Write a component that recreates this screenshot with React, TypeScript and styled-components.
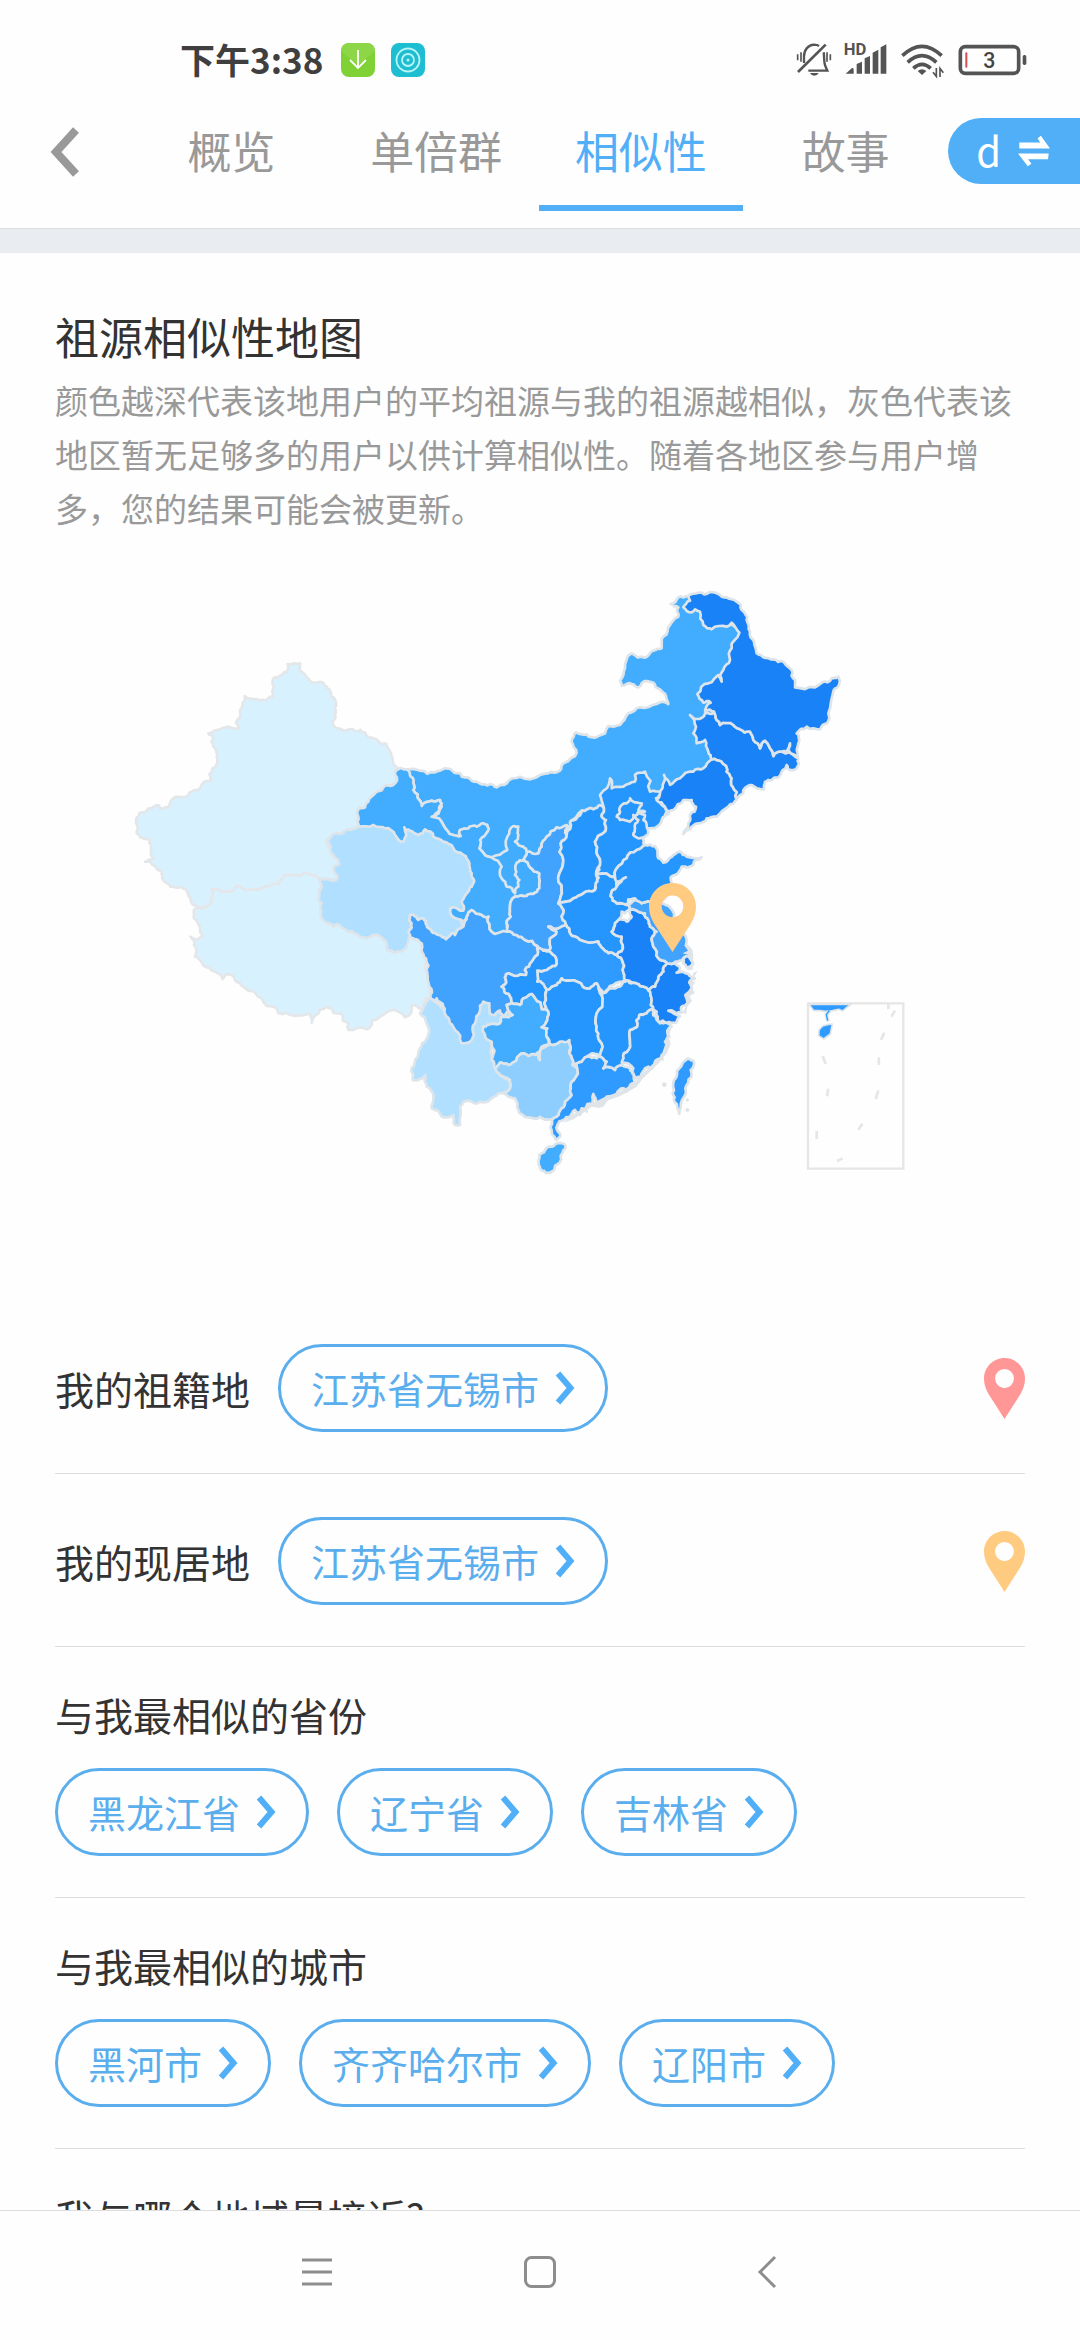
import React from "react";
import styled, { createGlobalStyle } from "styled-components";

const color = {
  brand: "#51aff7",
  brandText: "#5aaeed",
  ink: "#333333",
  muted: "#999999",
  line: "#dddddd",
  band: "#e9edf1",
  mapLine: "#dde5eb",
  coral: "#ff9797",
  amber: "#ffcb80",
  status: "#545454",
};

const GlobalStyle = createGlobalStyle`
  * { box-sizing: border-box; }
  body {
    margin: 0;
    background: #fefefe;
    color: ${color.ink};
    font-family: "Noto Sans CJK SC", "Noto Sans", sans-serif;
  }
  button {
    margin: 0;
    padding: 0;
    border: 0;
    background: none;
    color: inherit;
    font: inherit;
    cursor: pointer;
  }
`;

const Screen = styled.div`
  display: flex;
  flex-direction: column;
  height: 100vh;
  background: #fefefe;
`;

const StatusBar = styled.div`
  display: flex;
  flex: none;
  align-items: center;
  justify-content: space-between;
  height: 98px;
  padding: 22px 53px 0 180px;
`;

const StatusGroup = styled.div<{ $gap: number }>`
  display: flex;
  align-items: center;
  gap: ${(p) => p.$gap}px;
`;

const Clock = styled.time`
  margin-right: 2px;
  padding-bottom: 2px;
  color: #3f3f3f;
  font-size: 35px;
  font-weight: 700;
  line-height: 48px;
`;

const Header = styled.header`
  display: flex;
  flex: none;
  align-items: flex-start;
  padding-bottom: 17px;
  border-bottom: 1px solid ${color.line};
`;

const BackButton = styled.button`
  display: grid;
  place-items: center;
  width: 129px;
  height: 107px;
`;

const Tabs = styled.div`
  display: flex;
  flex: 1;
`;

const Tab = styled.button<{ $active: boolean }>`
  flex: 1;
  height: 113px;
  padding-bottom: 4px;
  border-bottom: 6px solid ${(p) => (p.$active ? color.brand : "transparent")};
  color: ${(p) => (p.$active ? color.brand : color.muted)};
  font-size: 44px;
  line-height: 64px;
`;

const SwitchButton = styled.button`
  display: flex;
  align-items: center;
  justify-content: flex-end;
  gap: 17px;
  width: 132px;
  height: 66px;
  margin-top: 20px;
  padding-right: 30px;
  border-radius: 33px 0 0 33px;
  background: ${color.brand};
  color: #ffffff;
  font-size: 40px;
`;

const SwitchLabel = styled.span`
  padding-bottom: 3px;
  line-height: 60px;
`;

const Content = styled.main`
  flex: 1;
  min-height: 0;
  overflow-y: auto;
  scrollbar-width: none;
  border-top: 24px solid ${color.band};
`;

const Intro = styled.section`
  padding: 48px 55px 0;
`;

const Title = styled.h1`
  margin: 0 0 2px;
  font-size: 44px;
  font-weight: 400;
  line-height: 70px;
`;

const Description = styled.p`
  margin: 0 0 1px;
  color: ${color.muted};
  font-size: 33px;
  line-height: 54px;
`;

const MapDrawing = styled.svg`
  display: block;
  width: 100%;
  height: auto;
`;

const PlaceBlock = styled.section`
  display: flex;
  align-items: center;
  gap: 28px;
  margin: 0 55px;
  padding: 43px 0 41px;
  border-bottom: 1px solid ${color.line};

  > svg {
    margin-left: auto;
  }
`;

const GroupBlock = styled.section`
  margin: 0 55px;
  padding: 40px 0 41px;
  border-bottom: 1px solid ${color.line};
`;

const Heading = styled.h2`
  margin: 0;
  font-size: 39px;
  font-weight: 400;
  line-height: 54px;
`;

const ChipRow = styled.div`
  display: flex;
  flex-wrap: wrap;
  gap: 28px;
  margin-top: 27px;
`;

const Chip = styled.button`
  display: flex;
  align-items: center;
  gap: 16px;
  height: 88px;
  padding: 0 30px;
  border: 3px solid ${color.brandText};
  border-radius: 44px;
  color: ${color.brandText};
  font-size: 38px;
  line-height: 54px;
`;

const SystemNav = styled.nav`
  display: flex;
  flex: none;
  justify-content: center;
  gap: 104px;
  height: 130px;
  border-top: 1px solid ${color.line};
`;

const NavButton = styled.button`
  display: grid;
  place-items: center;
  width: 121px;
  height: 121px;
`;

/* ---------- map data ---------- */

type Region = { name: string; fill: string; pts: string };

const pale = "#d8f1ff";
const light = "#b0dfff";
const soft = "#8dceff";
const sky = "#42adff";
const azure = "#42a3ff";
const blue = "#2696ff";
const mid = "#2f9aff";
const deep = "#1a82f7";

const westRegions: Region[] = [
  { name: "西藏", fill: pale, pts: "228,803 262,798 275,748 300,752 330,757 345,742 360,738 375,750 415,750 445,738 475,732 490,712 520,706 555,698 575,705 600,716 605,740 598,760 605,790 602,820 620,848 640,860 655,853 680,872 710,882 750,890 775,886 800,912 802,930 825,938 858,925 865,900 870,890 895,900 905,920 918,950 922,1000 928,1050 932,1080 915,1075 905,1110 875,1095 868,1125 855,1132 810,1112 780,1130 755,1145 740,1168 685,1170 685,1150 668,1140 665,1120 640,1118 620,1100 600,1108 575,1148 570,1120 525,1128 500,1118 475,1120 470,1105 440,1098 425,1075 405,1058 385,1052 360,1030 335,1005 318,1003 308,1017 295,1000 270,985 240,960 225,950 222,915 212,890 225,897 248,888 240,865 222,835 222,810" },
  { name: "新疆", fill: pale, pts: "503,72 540,70 540,92 560,112 582,128 596,126 612,133 628,148 634,170 648,188 647,220 637,245 644,262 670,271 705,273 735,277 765,297 785,312 798,311 805,325 818,355 832,383 826,395 825,430 795,437 770,455 745,485 735,502 717,503 715,530 718,560 690,570 660,582 620,600 630,630 655,660 658,672 640,685 652,715 625,718 600,716 575,705 555,698 520,706 490,712 475,732 445,738 415,750 375,750 360,738 345,742 330,757 300,752 275,748 262,798 235,803 215,790 205,765 198,748 165,742 140,730 128,718 125,695 105,678 75,665 100,655 92,620 88,597 60,592 50,580 48,550 58,520 85,505 115,495 120,507 145,503 157,478 200,470 215,455 245,435 273,422 277,385 292,372 290,350 280,320 280,290 265,280 300,268 330,262 355,265 348,248 360,210 374,168 400,178 435,182 460,170 462,140 463,112 485,105 500,95" },
];

const coreRegions: Region[] = [
  { name: "内蒙古", fill: sky, pts: "22,88 60,92 105,97 120,92 180,100 185,110 215,122 245,133 280,135 290,142 320,130 360,110 420,105 465,98 480,92 495,68 530,38 515,5 528,-23 560,-17 592,-10 625,-42 660,-45 685,-80 720,-98 770,-108 805,-108 798,-132 780,-152 760,-172 725,-170 715,-158 695,-168 665,-163 660,-178 675,-215 695,-260 735,-247 760,-268 785,-275 790,-310 810,-345 835,-370 835,-398 812,-408 835,-428 865,-432 890,-425 1030,-325 1010,-180 960,-90 935,60 810,165 780,170 620,215 612,205 580,208 545,212 510,250 500,265 470,262 440,290 425,320 415,340 380,345 340,380 275,352 265,350 238,325 238,300 262,275 260,255 230,260 180,270 182,288 160,285 130,255 95,230 125,200 120,180 95,182 65,198 58,180 40,150 42,135" },
  { name: "甘肃", fill: sky, pts: "-15,95 22,88 32,110 42,135 40,150 58,180 65,198 95,182 120,180 125,190 118,210 95,230 130,255 160,285 182,288 180,270 205,265 230,260 250,250 262,255 262,275 240,300 238,325 265,350 275,352 370,360 390,382 418,400 418,445 400,462 380,468 345,470 330,500 332,530 320,550 322,575 310,585 285,582 268,560 265,530 245,525 215,510 200,530 195,555 180,560 130,520 150,490 100,400 0,330 -60,300 -122,260 -125,230 -123,203 -105,202 -95,185 -70,155 -45,137 -15,130" },
  { name: "青海", fill: light, pts: "-122,260 -80,255 -45,265 -15,285 10,305 13,262 30,272 55,285 75,268 100,290 130,305 160,325 190,345 208,370 215,400 222,420 215,440 205,455 185,485 190,512 150,505 150,515 185,540 190,560 165,585 155,580 138,598 115,585 95,575 80,555 70,535 55,540 40,525 30,525 28,540 35,550 28,570 30,590 18,625 -15,638 -38,630 -40,612 -65,586 -90,590 -130,582 -160,572 -185,553 -200,560 -220,548 -238,520 -235,490 -242,460 -235,440 -240,416 -215,418 -188,415 -200,385 -182,372 -185,360 -210,330 -220,300 -180,282 -150,270" },
  { name: "云南", fill: light, pts: "92,775 80,785 70,800 60,820 75,835 75,905 55,940 45,965 35,985 38,1020 75,1005 80,1040 100,1070 95,1105 125,1130 160,1125 165,1155 180,1155 180,1100 205,1082 240,1085 270,1080 295,1060 320,1055 330,1035 325,1015 300,1005 285,985 275,960 275,910 255,885 250,860 275,852 300,850 302,835 325,832 338,825 300,800 260,770 200,850" },
  { name: "四川", fill: azure, pts: "30,525 40,525 55,540 70,535 80,555 95,575 115,585 138,598 155,580 165,585 190,560 200,530 215,510 245,525 265,530 268,560 285,582 320,575 350,585 375,600 412,618 405,650 395,665 375,690 378,705 345,708 318,703 318,722 305,740 315,758 330,770 335,790 320,795 325,812 310,828 300,812 285,825 270,822 268,790 250,785 240,812 225,850 222,885 215,900 185,910 165,870 150,850 140,830 130,800 110,775 105,785 92,775 88,740 82,700 78,655 68,640 58,605 40,595 30,590 28,570 35,550 28,540" },
  { name: "陕西", fill: azure, pts: "500,255 470,262 440,290 425,320 415,340 380,335 370,360 390,382 418,400 418,445 400,462 380,468 345,470 330,500 332,530 320,550 320,575 350,585 375,600 412,618 448,632 450,595 470,575 445,560 475,565 498,555 490,520 475,490 485,450 478,400 490,360 482,310 500,285" },
  { name: "宁夏", fill: sky, pts: "370,320 380,335 370,360 350,368 345,405 358,420 355,440 345,460 320,440 305,415 305,380 275,352 322,330 328,280 340,258 355,260 355,285 345,305" },
  { name: "山西", fill: blue, pts: "612,205 600,195 580,208 545,212 530,235 510,245 500,285 482,310 490,360 478,400 485,450 475,490 520,475 550,460 585,450 592,415 600,375 590,340 585,305 600,285 618,265 618,240 605,225" },
  { name: "河北", fill: blue, pts: "612,205 600,165 630,115 635,145 670,140 705,125 705,105 735,95 750,155 785,158 768,175 800,215 785,240 770,260 745,265 725,285 730,310 735,315 710,330 680,355 650,385 645,412 592,402 600,375 590,340 585,305 600,285 618,265 618,240 605,225" },
  { name: "北京", fill: blue, pts: "690,175 700,185 725,190 715,210 735,215 715,232 700,225 690,245 660,240 650,230 660,215 665,195 680,190" },
  { name: "天津", fill: blue, pts: "715,215 735,225 730,240 740,260 745,275 735,290 715,295 700,285 705,265 715,240 705,230" },
  { name: "河南", fill: blue, pts: "592,402 645,412 650,440 632,468 650,490 685,495 690,510 675,520 665,515 655,540 645,550 635,575 665,590 668,615 650,645 625,640 608,625 595,605 540,600 510,580 498,555 490,520 475,490 520,475 550,460 585,450 592,425" },
  { name: "湖北", fill: mid, pts: "445,560 475,565 498,555 510,580 540,600 595,605 608,625 625,640 650,645 668,665 668,690 675,722 640,735 608,760 590,730 570,745 548,740 510,722 485,715 470,735 440,750 430,732 412,725 412,692 440,690 465,678 468,655 448,632 450,595 470,575" },
  { name: "重庆", fill: blue, pts: "412,618 430,632 448,632 468,655 465,678 440,690 412,692 412,725 430,732 437,770 440,808 425,808 405,775 395,762 370,775 360,795 335,790 330,770 315,758 305,740 318,722 318,703 345,708 378,705 375,690 395,665 405,650" },
  { name: "贵州", fill: sky, pts: "250,860 275,852 300,850 302,835 325,832 338,825 325,812 320,795 335,790 360,795 370,775 395,762 405,775 425,808 440,808 442,840 425,862 442,865 440,890 445,915 425,920 405,945 385,948 370,940 350,960 325,975 300,968 285,985 275,960 275,905 255,885" },
  { name: "广西", fill: soft, pts: "285,985 300,968 325,975 350,960 370,940 385,948 405,945 415,940 420,960 425,925 450,912 480,905 500,900 508,910 508,940 518,975 532,985 525,1015 512,1040 515,1065 495,1085 485,1105 470,1130 440,1138 420,1130 385,1132 355,1110 345,1075 310,1058 330,1045 330,1020 300,1005" },
  { name: "广东", fill: mid, pts: "532,985 530,970 545,965 560,950 590,955 600,945 620,965 610,985 645,990 665,975 690,985 702,1005 705,1030 690,1035 680,1055 672,1045 650,1062 620,1070 605,1098 590,1085 580,1062 578,1095 562,1092 560,1115 545,1105 540,1125 525,1110 510,1130 490,1140 478,1144 472,1155 472,1172 480,1190 470,1200 456,1182 456,1140 470,1130 485,1105 495,1085 515,1065 512,1040 525,1015" },
  { name: "湖南", fill: blue, pts: "440,750 470,735 485,715 510,722 548,740 570,745 590,730 600,760 608,775 590,820 590,860 595,880 605,910 600,950 580,940 560,950 545,965 530,970 518,975 508,940 508,900 480,905 450,912 440,890 442,865 425,862 442,840 440,808 437,770" },
  { name: "江西", fill: blue, pts: "608,760 640,745 665,735 680,722 700,728 720,738 745,750 755,780 760,808 740,820 718,825 712,860 690,870 690,910 672,940 665,975 645,990 610,985 620,965 600,950 605,910 595,880 590,860 590,820 608,775" },
  { name: "福建", fill: blue, pts: "760,808 770,840 780,850 800,848 815,860 802,872 808,890 795,905 800,925 785,945 788,958 765,965 755,985 745,980 722,1012 708,1015 700,985 665,968 672,940 690,910 690,870 712,860 718,825 740,820" },
  { name: "浙江", fill: deep, pts: "800,668 820,670 840,685 830,698 865,702 885,715 868,728 876,745 856,765 864,790 845,800 846,818 805,812 840,828 828,848 800,848 775,845 770,815 760,808 755,780 745,750 765,740 775,710 790,695" },
  { name: "安徽", fill: deep, pts: "690,510 715,515 735,520 745,540 750,560 770,575 755,595 760,620 775,655 800,668 790,695 775,710 765,740 745,750 720,738 700,728 675,722 668,690 668,665 650,645 668,615 665,590 635,575 645,550 655,540 680,545 695,530" },
  { name: "江苏", fill: azure, pts: "685,495 705,480 725,490 750,485 785,490 808,500 822,530 835,560 860,600 858,615 875,635 865,650 850,655 835,665 820,670 800,668 775,655 760,620 755,595 770,575 750,560 745,540 735,520 715,515 690,510" },
  { name: "山东", fill: blue, pts: "645,412 650,385 680,355 710,330 735,315 765,318 773,332 775,355 790,368 805,360 820,345 840,335 860,350 905,352 880,375 845,380 825,405 812,412 815,430 800,440 790,480 750,485 725,490 705,475 685,478 680,495 650,490 632,468 650,440 678,412 650,425" },
  { name: "上海", fill: deep, pts: "850,655 865,648 880,670 860,682 850,670" },
  { name: "海南", fill: sky, pts: "418,1245 440,1223 455,1220 465,1213 494,1213 494,1228 482,1247 480,1267 460,1293 440,1300 423,1290 416,1270" },
  { name: "台湾", fill: mid, pts: "868,956 880,962 872,990 864,1030 857,1062 842,1100 838,1122 823,1085 818,1060 822,1020 838,985 855,962" },
];

const northEastRegions: Region[] = [
  { name: "辽宁", fill: deep, pts: "455,568 470,570 495,585 500,605 515,625 518,650 530,688 505,710 470,740 440,745 415,760 390,778 370,792 385,760 390,735 408,710 395,690 370,690 340,720 320,735 315,710 290,690 300,670 308,645 312,615 330,645 360,625 400,605 430,595" },
  { name: "吉林", fill: deep, pts: "390,435 410,447 435,430 462,425 470,450 480,465 520,465 540,478 570,485 580,510 600,535 615,512 640,558 665,545 690,548 715,565 710,595 690,600 680,585 665,605 635,630 615,635 612,658 590,655 570,645 550,670 530,688 518,650 515,625 500,605 495,585 470,570 455,568 445,545 435,510 410,520 400,490 408,470" },
  { name: "黑龙江", fill: deep, pts: "385,78 415,68 450,66 480,75 505,85 530,95 545,120 560,150 570,185 582,215 590,250 610,262 640,268 670,275 695,300 705,330 705,352 765,352 785,338 815,325 834,320 834,350 820,365 805,430 780,478 740,470 710,490 715,520 712,560 690,548 690,520 680,545 665,545 640,558 615,512 600,535 580,510 570,485 540,478 520,465 480,465 470,450 462,425 435,422 440,408 452,398 440,393 430,398 412,372 445,340 475,315 485,335 490,300 510,270 515,235 538,188 515,158 500,170 455,178 430,165 420,125 405,118 395,127 370,112 390,92" },
];

const insetRegions: Region[] = [
  { name: "广东沿海", fill: mid, pts: "57,73 183,73 168,84 158,93 146,88 118,94 105,94 88,92 70,91" },
  { name: "海南", fill: mid, pts: "98,138 112,134 127,132 121,162 101,177 86,167 87,150" },
];

const insetDashes =
  "M295 72V88M315 92L304 110M283 158L273 180M266 232L267 255M265 331L257 357M217 431L205 449M158 535L141 543M80 453V477M115 326L111 349M98 228L107 252";

type Pt = [number, number];

/* Midpoint displacement; the offset depends only on the edge itself, so two
   neighbours that share an edge get the same rough border. */
function splitEdge(a: Pt, b: Pt, depth: number): Pt[] {
  const len = Math.hypot(b[0] - a[0], b[1] - a[1]);
  if (depth === 0 || len < 9) return [a];
  const flip = a[0] > b[0] || (a[0] === b[0] && a[1] > b[1]);
  const [p, q] = flip ? [b, a] : [a, b];
  const mx = (p[0] + q[0]) / 2;
  const my = (p[1] + q[1]) / 2;
  const seed = Math.sin(mx * 12.9898 + my * 78.233) * 43758.5453;
  const k = (seed - Math.floor(seed) - 0.5) * 0.4;
  const m: Pt = [mx - (q[1] - p[1]) * k, my + (q[0] - p[0]) * k];
  return [...splitEdge(a, m, depth - 1), ...splitEdge(m, b, depth - 1)];
}

function outline(pts: string, depth: number): string {
  const list = pts.split(" ").map((s) => s.split(",").map(Number) as Pt);
  const rough = list.flatMap((p, i) => splitEdge(p, list[(i + 1) % list.length], depth));
  return "M" + rough.map((p) => `${p[0].toFixed(1)} ${p[1].toFixed(1)}`).join("L") + "Z";
}

type RegionsProps = { items: Region[]; origin: string; line?: string; width?: number; depth?: number };

function Regions({ items, origin, line = color.mapLine, width = 8, depth = 2 }: RegionsProps) {
  return (
    <g transform={`translate(${origin}) scale(0.33333)`} stroke={line} strokeWidth={width} strokeLinejoin="round">
      {items.map((r) => (
        <path key={r.name} d={outline(r.pts, depth)} fill={r.fill} />
      ))}
    </g>
  );
}

const pinShape =
  "M23.5 0C10.5 0 0 10.5 0 23.5C0 30 2 35 5 40.500L23.500 69L42 40.500C45 35 47 30 47 23.500C47 10.500 36.500 0 23.500 0ZM23.500 12.500A10.800 10.800 0 1 1 23.500 34.100A10.800 10.800 0 1 1 23.500 12.500Z";

function SimilarityMap() {
  return (
    <MapDrawing viewBox="55 536 970 765" role="img" aria-label="祖源相似性地图">
      <Regions items={westRegions} origin="120 640" line="#e4e7e9" />
      <Regions items={coreRegions} origin="400 740" />
      <Regions items={northEastRegions} origin="560 570" />
      <g transform="translate(400 740) scale(0.33333)" fill="#dfe4e8">
        <circle cx="793" cy="1034" r="7" />
        <circle cx="862" cy="1080" r="5" />
        <circle cx="862" cy="1110" r="6" />
        <path d="M893 692L884 708L878 728L888 722L876 742L884 760L868 768L876 782L862 800L858 822L848 818L862 790L856 765L872 742L866 726L880 712L878 700Z" />
        <path d="M852 615L872 625L880 645L878 690L860 690L874 670L866 645L848 640L864 632Z" />
        <path d="M815 862L806 890L812 912L800 940L780 965L755 990L728 1016L710 1040L690 1052L655 1070L625 1080L600 1104L575 1100L550 1118L520 1138L490 1148L512 1128L545 1108L580 1088L620 1068L660 1055L700 1030L745 985L785 945L798 905L802 872Z" />
      </g>
      <g transform="translate(790 980) scale(0.33333)">
        <rect x="54" y="70" width="286" height="496" fill="none" stroke="#e6e6e6" strokeWidth="7" />
        <path d={insetDashes} fill="none" stroke="#e6e6e6" strokeWidth="8" />
        <path d="M120 92L109 104L114 124" fill="none" stroke="#dde5eb" strokeWidth="11" />
      </g>
      <Regions items={insetRegions} origin="790 980" width={5} depth={0} />
      <g transform="translate(790 980) scale(0.33333)">
        <path d="M118 92L109 104L113 122" fill="none" stroke={mid} strokeWidth="4" />
      </g>
      <path transform="translate(649 883)" d={pinShape} fill={color.amber} fillRule="evenodd" />
    </MapDrawing>
  );
}

/* ---------- icons ---------- */

const StatusIcon = styled.svg`
  display: block;
  overflow: visible;
`;

const Pin = ({ fill }: { fill: string }) => (
  <svg width="41" height="61" viewBox="0 0 47 69" preserveAspectRatio="none" aria-hidden="true">
    <path d={pinShape} fill={fill} fillRule="evenodd" />
  </svg>
);

const ChipArrow = () => (
  <svg width="20" height="34" viewBox="0 0 20 34" fill="none" stroke={color.brand} strokeWidth="6" aria-hidden="true">
    <path d="M3 2.500L15.500 17L3 31.500" />
  </svg>
);

const BackIcon = () => (
  <svg width="30" height="50" viewBox="0 0 30 50" fill="none" stroke={color.muted} strokeWidth="8" aria-hidden="true">
    <path d="M26 3L6 25L26 47" />
  </svg>
);

const SwapIcon = () => (
  <svg width="32" height="32" viewBox="0 0 98 96" fill="#ffffff" aria-hidden="true">
    <path d="M4 22H68L60 9L70 1L98 40H4ZM94 56H0L30 95L41 87L31 73H92Z" />
  </svg>
);

const DownloadBadge = () => (
  <svg width="34" height="34" viewBox="0 0 34 34" aria-hidden="true">
    <rect width="34" height="34" rx="8" fill="#7fd136" />
    <path d="M0 8a8 8 0 0 1 8-8h18a8 8 0 0 1 8 8L17 22Z" fill="#8dd647" />
    <path d="M17 7V25M9 17L17 25L25 17" fill="none" stroke="#ffffff" strokeWidth="1.800" />
  </svg>
);

const RadarBadge = () => (
  <svg width="34" height="34" viewBox="0 0 34 34" fill="none" stroke="#b9f4f6" strokeWidth="1.800" aria-hidden="true">
    <rect width="34" height="34" rx="8" fill="#1dbdd2" stroke="none" />
    <circle cx="17" cy="17" r="11.500" />
    <circle cx="17" cy="17" r="6" />
    <circle cx="17" cy="17" r="1.500" fill="#b9f4f6" stroke="none" />
  </svg>
);

const MutedBell = () => (
  <StatusIcon width="34" height="34" viewBox="0 0 102 102" fill="none" stroke={color.status} strokeWidth="7" aria-hidden="true">
    <path d="M3 87L86 5" strokeWidth="8" />
    <path d="M21 60V40C21 20 34 6 51 5C57 5 62 6 66 9M80 28C82 36 80 58 85 69L91 83H34" />
    <path d="M39 90H65Q61 98 52 98Q43 98 39 90Z" fill={color.status} stroke="none" />
    <path d="M2 34V52M12 28V56M90 28V56M100 34V52" strokeWidth="5" />
  </StatusIcon>
);

const Signal = () => (
  <StatusIcon width="42" height="34" viewBox="0 0 126 102" fill={color.status} aria-hidden="true">
    <path d="M2 92L20 76Q26 72 26 80V92ZM35 63L51 56V92H35ZM59 46L75 39V92H59ZM83 29L100 20V92H83ZM107 13L124 4V92H107Z" />
    <text x="-4" y="36" fontSize="50" fontWeight="700" fontFamily="Roboto, sans-serif">HD</text>
  </StatusIcon>
);

const Wifi = () => (
  <StatusIcon width="43" height="34" viewBox="0 0 129 102" fill="none" stroke={color.status} strokeWidth="11" aria-hidden="true">
    <path d="M4 38Q63 -18 122 38M20 58Q63 18 106 58M37 76Q63 52 89 76" />
    <path d="M50 84Q63 74 76 84L63 96Z" fill={color.status} stroke="none" />
    <path d="M106 75V100L96 88M117 102V76L127 89" strokeWidth="5" />
  </StatusIcon>
);

const Battery = () => (
  <StatusIcon width="69" height="30" viewBox="0 0 207 90" fill="none" aria-hidden="true">
    <rect x="7" y="5" width="175" height="80" rx="15" stroke={color.status} strokeWidth="11" />
    <rect x="194" y="30" width="11" height="30" rx="5" fill={color.status} />
    <rect x="22" y="22" width="6" height="46" rx="3" fill="#d0504f" />
    <text x="94" y="69" textAnchor="middle" fontSize="64" fontFamily="Roboto, sans-serif" fontWeight="500" fill="#444444">3</text>
  </StatusIcon>
);

const MenuIcon = () => (
  <svg width="36" height="36" viewBox="0 0 36 36" stroke="#8d8d8d" strokeWidth="3" aria-hidden="true">
    <path d="M5 6H35M5 18H35M5 30H35" />
  </svg>
);

const HomeIcon = () => (
  <svg width="36" height="36" viewBox="0 0 36 36" fill="none" stroke="#8d8d8d" strokeWidth="3" aria-hidden="true">
    <rect x="3.500" y="3.500" width="29" height="29" rx="6" />
  </svg>
);

const ReturnIcon = () => (
  <svg width="36" height="36" viewBox="0 0 36 36" fill="none" stroke="#8d8d8d" strokeWidth="3" aria-hidden="true">
    <path d="M28 3L13 18L28 33" />
  </svg>
);

/* ---------- page ---------- */

const tabs = ["概览", "单倍群", "相似性", "故事"];

const places = [
  { label: "我的祖籍地", value: "江苏省无锡市", pin: color.coral },
  { label: "我的现居地", value: "江苏省无锡市", pin: color.amber },
];

const groups = [
  { title: "与我最相似的省份", items: ["黑龙江省", "辽宁省", "吉林省"] },
  { title: "与我最相似的城市", items: ["黑河市", "齐齐哈尔市", "辽阳市"] },
];

const PlaceChip = ({ name }: { name: string }) => (
  <Chip type="button">
    {name}
    <ChipArrow />
  </Chip>
);

export default function App() {
  const [active, setActive] = React.useState("相似性");

  return (
    <Screen>
      <GlobalStyle />
      <StatusBar>
        <StatusGroup $gap={16}>
          <Clock>下午3:38</Clock>
          <DownloadBadge />
          <RadarBadge />
        </StatusGroup>
        <StatusGroup $gap={14}>
          <MutedBell />
          <Signal />
          <Wifi />
          <Battery />
        </StatusGroup>
      </StatusBar>
      <Header>
        <BackButton type="button" aria-label="返回">
          <BackIcon />
        </BackButton>
        <Tabs role="tablist">
          {tabs.map((t) => (
            <Tab key={t} type="button" role="tab" aria-selected={t === active} $active={t === active} onClick={() => setActive(t)}>
              {t}
            </Tab>
          ))}
        </Tabs>
        <SwitchButton type="button">
          <SwitchLabel>d</SwitchLabel>
          <SwapIcon />
        </SwitchButton>
      </Header>
      <Content>
        <Intro>
          <Title>祖源相似性地图</Title>
          <Description>
            颜色越深代表该地用户的平均祖源与我的祖源越相似，灰色代表该地区暂无足够多的用户以供计算相似性。随着各地区参与用户增多，您的结果可能会被更新。
          </Description>
          <SimilarityMap />
        </Intro>
        {places.map((p) => (
          <PlaceBlock key={p.label}>
            <Heading>{p.label}</Heading>
            <PlaceChip name={p.value} />
            <Pin fill={p.pin} />
          </PlaceBlock>
        ))}
        {groups.map((g) => (
          <GroupBlock key={g.title}>
            <Heading>{g.title}</Heading>
            <ChipRow>
              {g.items.map((name) => (
                <PlaceChip key={name} name={name} />
              ))}
            </ChipRow>
          </GroupBlock>
        ))}
        <GroupBlock>
          <Heading>我与哪个地域最接近?</Heading>
        </GroupBlock>
      </Content>
      <SystemNav aria-label="系统导航">
        <NavButton type="button" aria-label="最近任务">
          <MenuIcon />
        </NavButton>
        <NavButton type="button" aria-label="主屏幕">
          <HomeIcon />
        </NavButton>
        <NavButton type="button" aria-label="返回上一页">
          <ReturnIcon />
        </NavButton>
      </SystemNav>
    </Screen>
  );
}
